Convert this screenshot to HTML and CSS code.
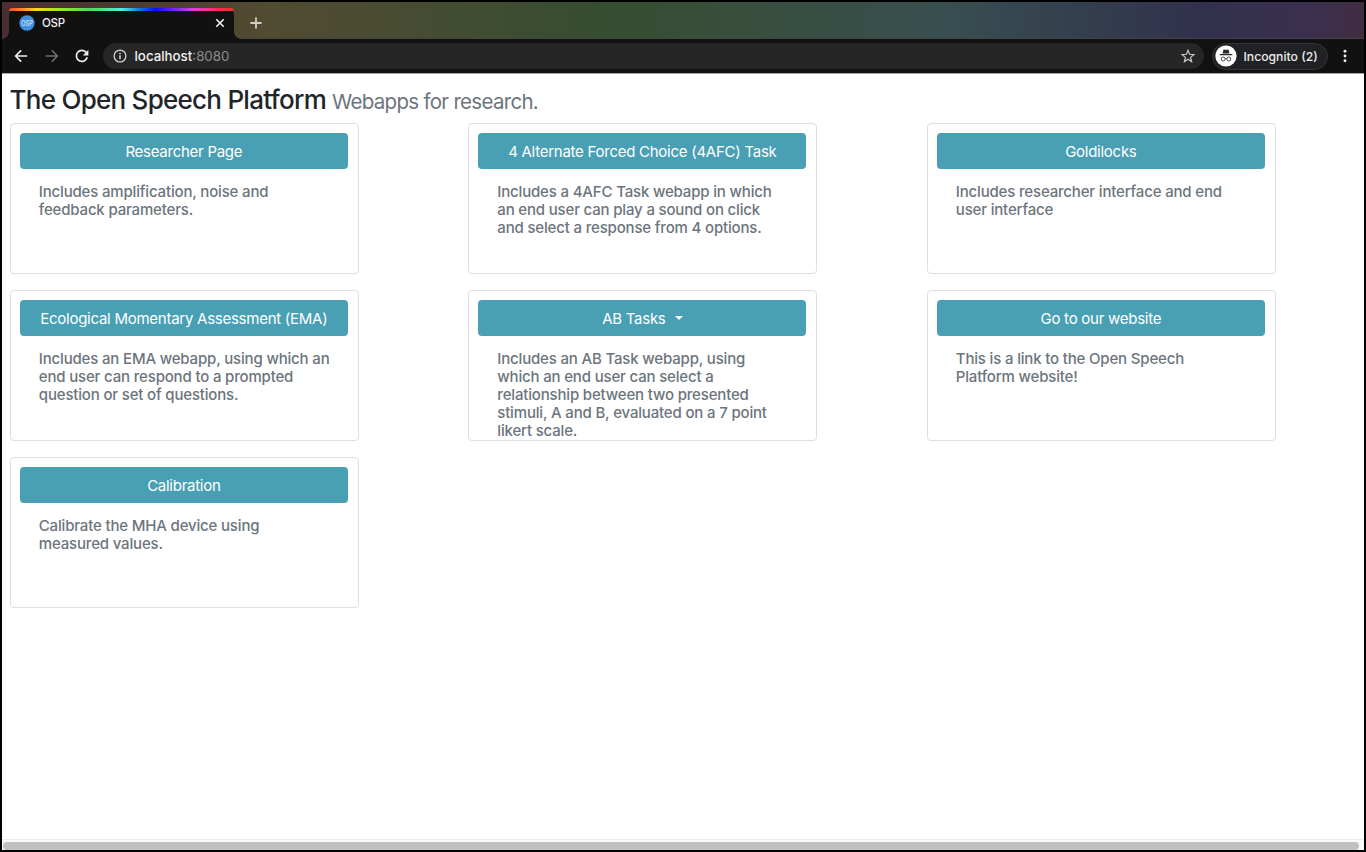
FILE: index.html
```html
<!DOCTYPE html>
<html lang="en">
<head>
<meta charset="utf-8">
<title>OSP</title>
<link rel="stylesheet" href="styles.css">
</head>
<body>
<div class="window">
  <div class="tabstrip">
    <div class="tab">
      <svg class="favicon" viewBox="0 0 16 16"><circle cx="8" cy="8" r="7.7" fill="#3f8fde"/><text x="8" y="10.6" text-anchor="middle" textLength="11.5" lengthAdjust="spacingAndGlyphs" class="favicon-text">OSP</text></svg>
      <span class="tab-title">OSP</span>
      <svg class="tab-close" viewBox="0 0 10 10"><path d="M1.3 1.3l7.4 7.4M8.7 1.3L1.3 8.7" stroke="#f1f1f1" stroke-width="1.6"/></svg>
    </div>
    <svg class="new-tab" viewBox="0 0 12 12"><path d="M6 .4v11.2M.4 6h11.2" stroke="#d0d0c8" stroke-width="1.8"/></svg>
  </div>
  <div class="toolbar">
    <svg class="nav" viewBox="0 0 14 14"><path d="M13.2 7H1.8M7.2 1.4L1.6 7l5.6 5.6" fill="none" stroke="#f0f0f0" stroke-width="1.6"/></svg>
    <svg class="nav" viewBox="0 0 14 14"><path d="M.8 7h11.4M6.8 1.4L12.4 7l-5.6 5.6" fill="none" stroke="#6d6d6d" stroke-width="1.5"/></svg>
    <svg class="nav" viewBox="0 0 14 14"><path d="M12.2 8.3A5.5 5.5 0 1 1 11.3 3.6" fill="none" stroke="#f0f0f0" stroke-width="1.7"/><path d="M13.4.8v5.6H7.8z" fill="#f0f0f0"/></svg>
    <div class="address">
      <svg class="info" viewBox="0 0 14 14"><circle cx="7" cy="7" r="5.9" fill="none" stroke="#d5d5d5" stroke-width="1.3"/><path d="M7 6.2v4M7 3.7v1.5" stroke="#d5d5d5" stroke-width="1.5"/></svg>
      <span class="url">localhost<span class="port">:8080</span></span>
      <svg class="star" viewBox="0 0 14 14"><path d="M7 1.3l1.6 4 4.3.3-3.3 2.8 1 4.2L7 10.3l-3.6 2.3 1-4.2L1.1 5.6l4.3-.3z" fill="none" stroke="#c8c8c8" stroke-width="1.2"/></svg>
    </div>
    <div class="incognito">
      <svg class="avatar" viewBox="0 0 22 22"><circle cx="11" cy="11" r="10.6" fill="#fff"/><path d="M7.5 8.4l1-3.6q.2-.5.8-.3l1.7.4 1.7-.4q.6-.2.8.3l1 3.6zM4.7 9h12.6v1.2H4.7z" fill="#28292c"/><g fill="none" stroke="#3a3b3e" stroke-width=".9"><circle cx="8.2" cy="14" r="2"/><circle cx="13.8" cy="14" r="2"/><path d="M10.2 13.8q.8-.6 1.6 0"/></g></svg>
      <span class="incognito-label">Incognito (2)</span>
    </div>
    <svg class="menu" viewBox="0 0 4 14"><g fill="#efefef"><circle cx="2" cy="2.3" r="1.45"/><circle cx="2" cy="7" r="1.45"/><circle cx="2" cy="11.7" r="1.45"/></g></svg>
  </div>
  <main class="page">
    <h1 class="heading"><span class="title">The Open Speech Platform</span><small class="subtitle">Webapps for research.</small></h1>
    <div class="cards">
      <section class="card"><a class="btn">Researcher Page</a><p class="desc">Includes amplification, noise and<br>feedback parameters.</p></section>
      <section class="card"><a class="btn">4 Alternate Forced Choice (4AFC) Task</a><p class="desc">Includes a 4AFC Task webapp in which<br>an end user can play a sound on click<br>and select a response from 4 options.</p></section>
      <section class="card"><a class="btn">Goldilocks</a><p class="desc">Includes researcher interface and end<br>user interface</p></section>
      <section class="card"><a class="btn">Ecological Momentary Assessment (EMA)</a><p class="desc">Includes an EMA webapp, using which an<br>end user can respond to a prompted<br>question or set of questions.</p></section>
      <section class="card"><a class="btn">AB Tasks<span class="caret"></span></a><p class="desc">Includes an AB Task webapp, using<br>which an end user can select a<br>relationship between two presented<br>stimuli, A and B, evaluated on a 7 point<br>likert scale.</p></section>
      <section class="card"><a class="btn">Go to our website</a><p class="desc">This is a link to the Open Speech<br>Platform website!</p></section>
      <section class="card"><a class="btn">Calibration</a><p class="desc">Calibrate the MHA device using<br>measured values.</p></section>
    </div>
  </main>
  <div class="scrollbar"><div class="thumb"></div></div>
</div>
</body>
</html>
```
FILE: styles.css
```css
* { box-sizing: border-box; }
body { margin: 0; background: #000; font-family: Inter, "Liberation Sans", sans-serif; }
svg { display: block; flex: none; }
.window { width: 1366px; height: 852px; border: 2px solid #000; display: flex; flex-direction: column; background: #fff; overflow: hidden; }

.tabstrip { height: 37px; flex: none; display: flex; align-items: flex-start; padding: 6px 0 0 7px; border-bottom: 1px solid #454545; background: linear-gradient(90deg, #4b2e32 0, #4d3831 8%, #514b31 19%, #4b4c32 26%, #364d30 44%, #384f40 56%, #384f50 69%, #31314d 88%, #3b2f4f 96%, #402d42 100%); }
.tab { position: relative; width: 225px; height: 31px; display: flex; align-items: center; padding: 0 9px 2px 10px; background: #111; border-radius: 7px 7px 0 0; }
.tab::before { content: ""; position: absolute; left: 0; right: 0; top: 0; height: 3px; border-radius: 6px 6px 0 0; background: linear-gradient(90deg, #ff4a22 0, #ffd22a 12%, #8fe632 24%, #43e052 36%, #52eee0 50%, #087ce8 58%, #0713ef 65%, #7222ed 73%, #e43ae5 82%, #f52f55 93%, #f52c22 100%); }
.tab::after { content: ""; position: absolute; left: -7px; right: -7px; bottom: 0; height: 7px; background: radial-gradient(circle at 0 0, transparent 6.5px, #111 7px) left / 7px 7px no-repeat, radial-gradient(circle at 100% 0, transparent 6.5px, #111 7px) right / 7px 7px no-repeat; }
.favicon { width: 16px; height: 16px; }
.favicon-text { font: 500 7px Inter, sans-serif; fill: #d8edff; }
.tab-title { margin-left: 7px; color: #f0f0f0; font-size: 11.5px; font-weight: 500; letter-spacing: -.3px; }
.tab-close { width: 10px; height: 10px; margin-left: auto; }
.new-tab { width: 12px; height: 12px; margin: 9px 0 0 16px; }

.toolbar { height: 35px; flex: none; display: flex; align-items: center; background: #111; border-bottom: 1px solid #a5a5a5; padding: 0 0 0 12px; }
.nav { width: 14px; height: 14px; margin-right: 16.5px; }
.address { width: 1101px; height: 26px; margin-left: -3px; display: flex; align-items: center; border-radius: 13px; background: #262626; padding: 0 9px 0 10px; }
.info { width: 14px; height: 14px; }
.url { margin-left: 8px; font-size: 13.3px; font-weight: 500; color: #f2f2f2; }
.port { color: #8c8c8c; font-weight: 400; }
.star { width: 14px; height: 14px; margin-left: auto; }
.incognito { width: 116px; height: 27px; margin-left: 8px; display: flex; align-items: center; border: 1px solid #343537; border-radius: 14px; background: #202124; padding-left: 2px; }
.avatar { width: 22px; height: 22px; }
.incognito-label { margin-left: 7px; color: #ededed; font-size: 12.2px; font-weight: 500; white-space: nowrap; }
.menu { width: 4px; height: 14px; margin-left: 15px; }

.page { flex: 1; padding: 10px 7.6px 0; overflow: hidden; }
.heading { height: 39px; margin: 0; display: flex; align-items: baseline; line-height: 31px; font-weight: 500; color: #212529; white-space: nowrap; }
.title { font-size: 26px; letter-spacing: -.74px; }
.subtitle { margin-left: 6px; font-size: 20.5px; font-weight: 400; letter-spacing: -.7px; color: #6c757d; }
.cards { display: grid; grid-template-columns: repeat(3, 349px); column-gap: 109.5px; grid-auto-rows: 151px; row-gap: 16px; }
.card { border: 1px solid #dfdfdf; border-radius: 4px; padding: 9px 9.8px 9px 9.3px; }
.btn { height: 36px; display: flex; align-items: center; justify-content: center; border-radius: 4px; background: #499fb4; color: #fff; font-size: 15px; letter-spacing: -.26px; white-space: nowrap; }
.caret { margin-left: 9px; border: 4px solid transparent; border-top-color: #fff; border-bottom: 0; }
.desc { margin: 14px 0 0 18.9px; font-size: 15px; line-height: 18px; font-weight: 500; letter-spacing: -.17px; color: #6c757d; white-space: nowrap; }

.scrollbar { height: 11px; flex: none; border-top: 1px solid #ededed; background: #fafafa; padding: 2px 5px 0 1px; }
.thumb { height: 8px; border-radius: 4px; background: #c1c1c1; }
```
